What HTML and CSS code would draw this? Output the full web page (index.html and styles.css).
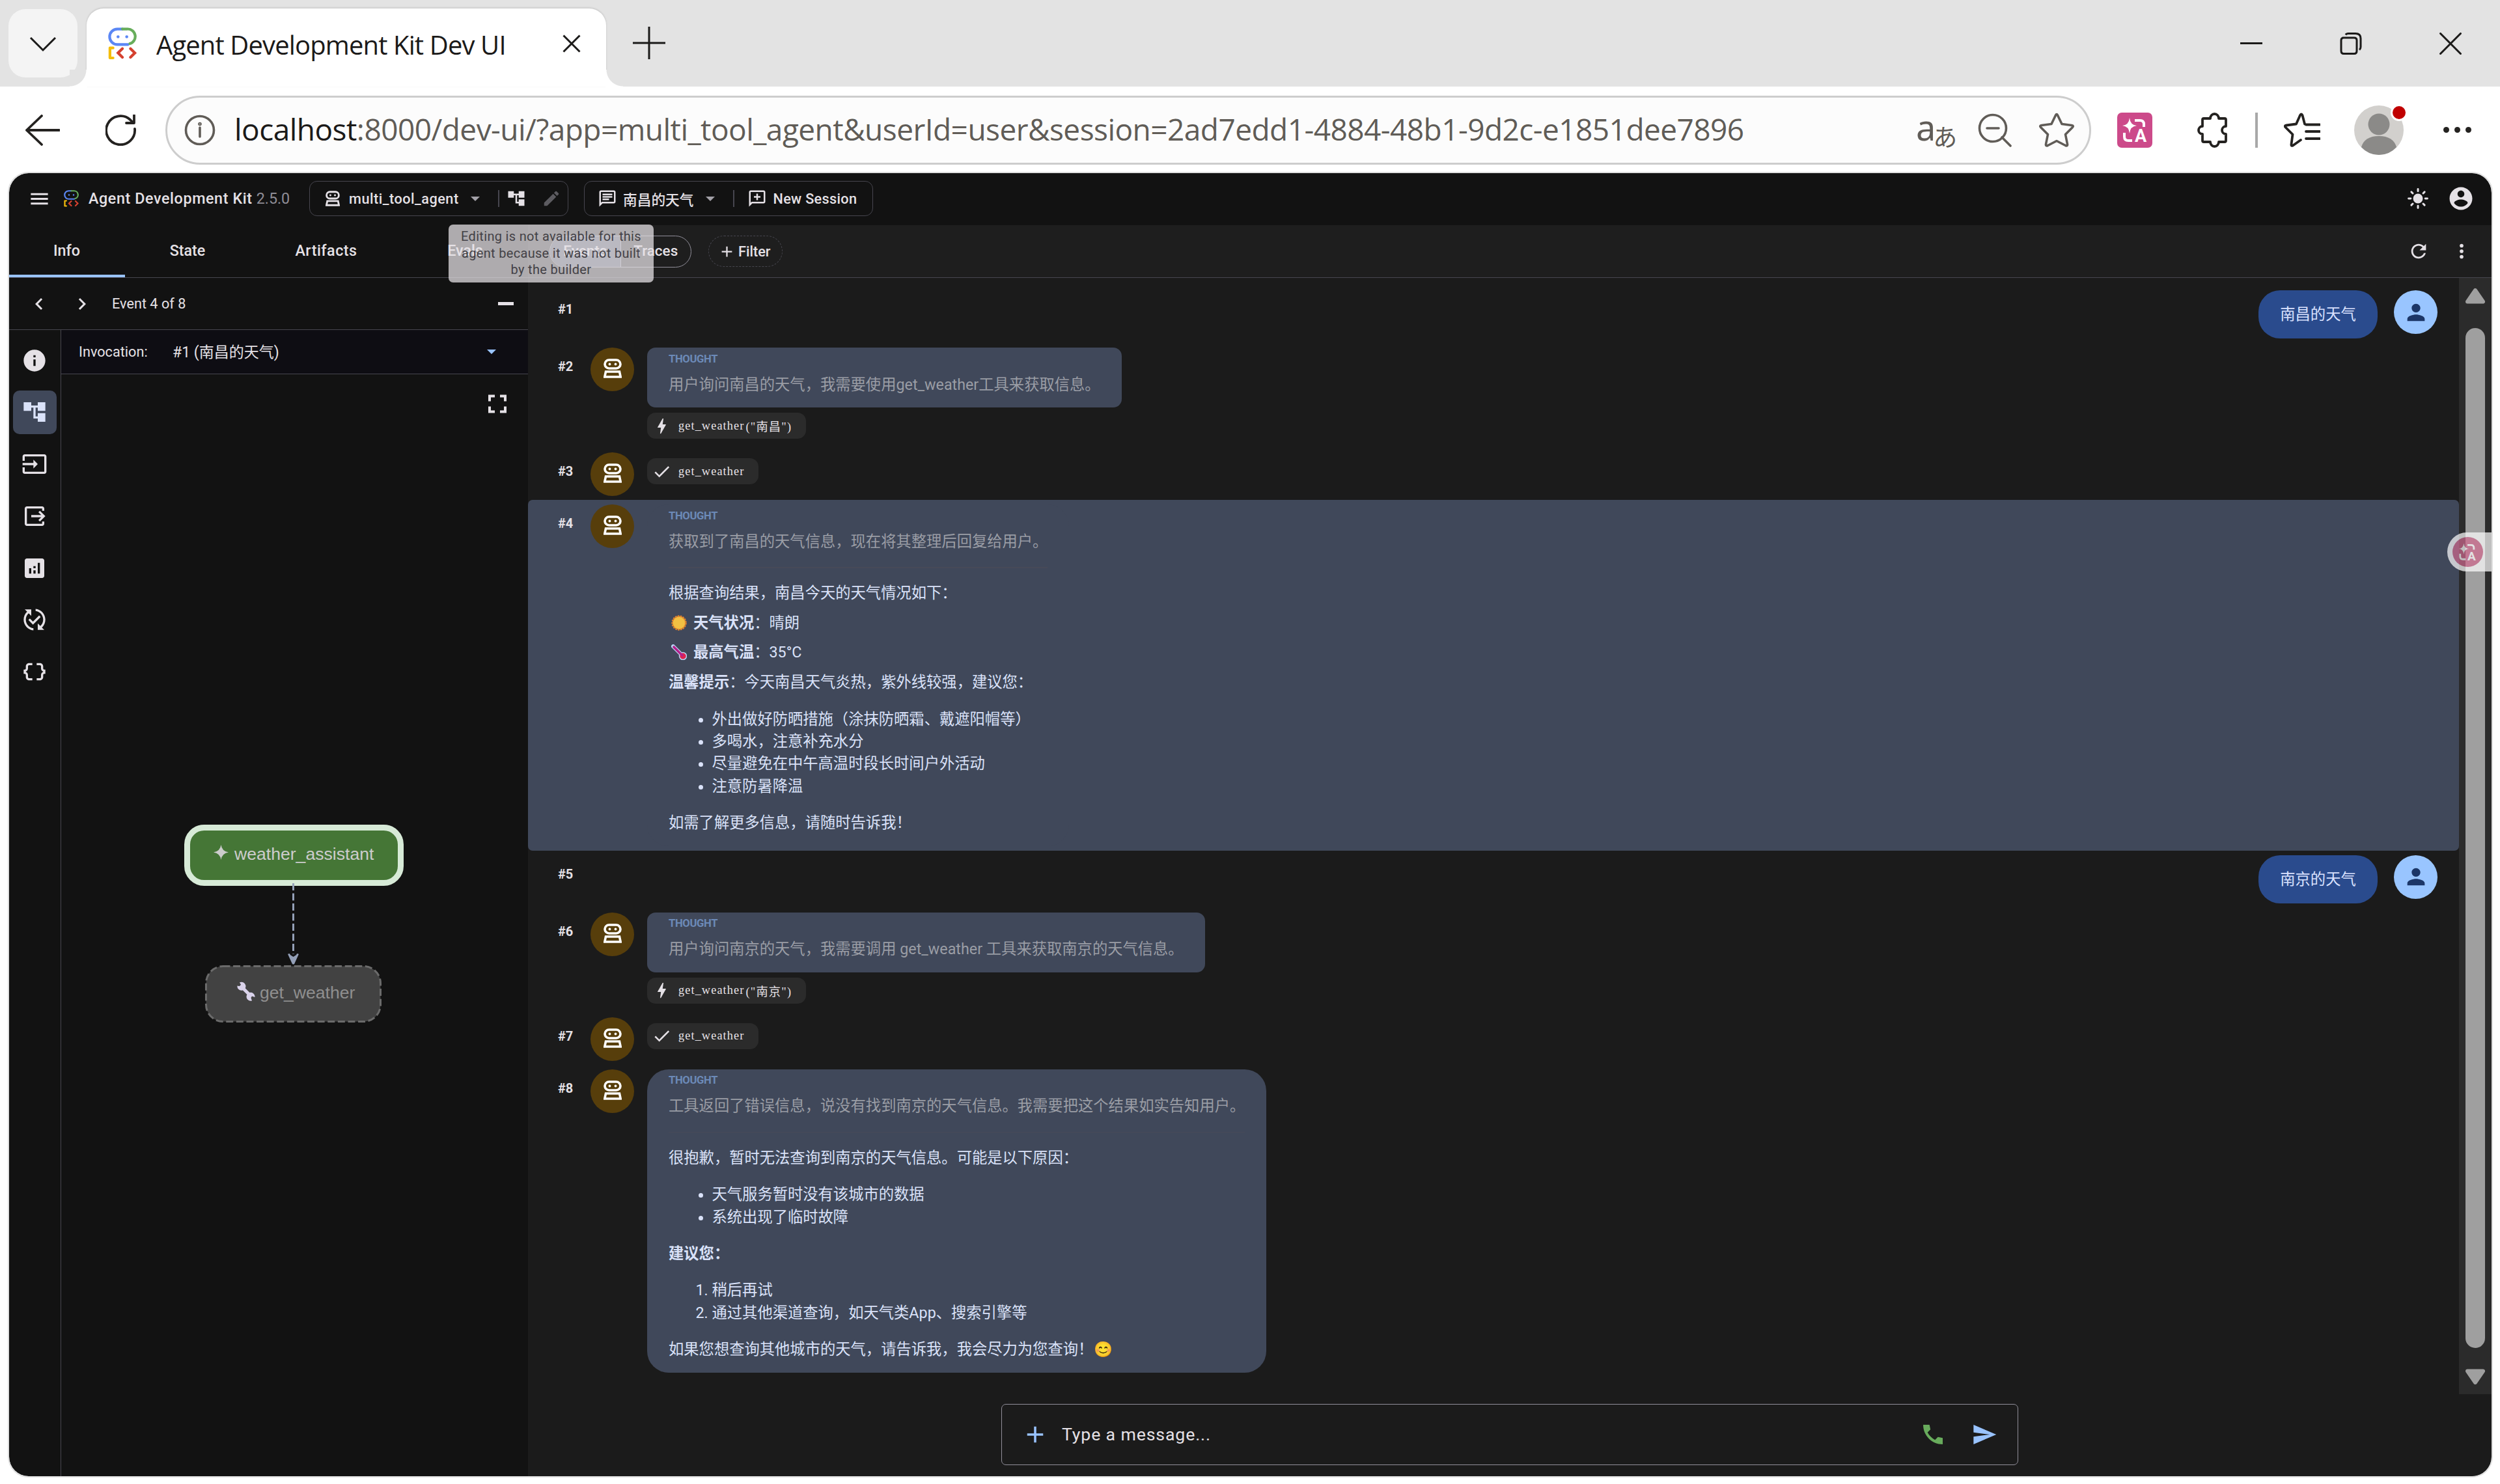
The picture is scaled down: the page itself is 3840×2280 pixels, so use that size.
FILE: index.html
```html
<!DOCTYPE html>
<html lang="zh-CN">

<head>
    <meta charset="UTF-8">
    <meta name="viewport" content="width=device-width, initial-scale=1.0">
    <title>Agent Development Kit Dev UI</title>
    <link rel="stylesheet" href="styles.css">
</head>

<body>
    <!-- Icônes partagées -->
    <svg class="sprite">
        <symbol id="i-logo" viewBox="0 0 46 52" fill="none" stroke-width="4.4" stroke-linecap="round">
            <path d="M23 2.5H15A12 12 0 0 0 15 27.500H32" stroke="#5b87f5"/>
            <path d="M23 2.500H31A12 12 0 0 1 35 26" stroke="#67ad5b"/>
            <circle cx="16" cy="15" r="2.400" fill="#5b87f5"/>
            <circle cx="30" cy="15" r="2.400" fill="#5b87f5"/>
            <path d="M8 33H3V49H8" stroke="#f4bd0b" stroke-linejoin="round"/>
            <path d="M23 34L16 41L23 48M36 34L43 41L36 48" stroke="#d5412f"/>
        </symbol>
        <symbol id="i-robot" viewBox="0 0 28 30" fill="none" stroke="currentColor" stroke-width="3.6">
            <rect x="2" y="2" width="24" height="13" rx="6.500"/>
            <circle cx="9.500" cy="8.500" r="1.900" fill="currentColor" stroke="none"/>
            <circle cx="18.500" cy="8.500" r="1.900" fill="currentColor" stroke="none"/>
            <path d="M3.500 20H24.500L26.200 28H1.800Z"/>
        </symbol>
        <symbol id="i-menu" viewBox="0 0 24 24"><path d="M3 18h18v-2H3v2zm0-5h18v-2H3v2zm0-7v2h18V6H3z"/></symbol>
        <symbol id="i-tree" viewBox="0 0 24 24"><path d="M22 11V3h-7v3H9V3H2v8h7V8h2v10h4v3h7v-8h-7v3h-2V8h2v3z"/></symbol>
        <symbol id="i-edit" viewBox="0 0 24 24"><path d="M3 17.250V21h3.750L17.810 9.940l-3.750-3.750L3 17.250zM20.710 7.040a1 1 0 0 0 0-1.410l-2.340-2.340a1 1 0 0 0-1.410 0l-1.830 1.830 3.750 3.750 1.830-1.830z"/></symbol>
        <symbol id="i-chat" viewBox="0 0 24 24"><path d="M4 4h16v12H5.170L4 17.170V4m0-2c-1.100 0-1.990.9-1.990 2L2 22l4-4h14c1.100 0 2-.9 2-2V4c0-1.100-.9-2-2-2H4zm2 10h8v2H6v-2zm0-3h12v2H6V9zm0-3h12v2H6V6z"/></symbol>
        <symbol id="i-newchat" viewBox="0 0 24 24"><path d="M4 4h16v12H5.170L4 17.170V4m0-2c-1.100 0-1.990.9-1.990 2L2 22l4-4h14c1.100 0 2-.9 2-2V4c0-1.100-.9-2-2-2H4zM11 14h2v-3h3V9h-3V6h-2v3H8v2h3z"/></symbol>
        <symbol id="i-account" viewBox="0 0 24 24"><path d="M12 2C6.480 2 2 6.480 2 12s4.480 10 10 10 10-4.480 10-10S17.520 2 12 2zm0 3c1.660 0 3 1.340 3 3s-1.340 3-3 3-3-1.340-3-3 1.340-3 3-3zm0 14.200c-2.500 0-4.710-1.280-6-3.220.03-1.990 4-3.080 6-3.080 1.990 0 5.970 1.090 6 3.080-1.290 1.940-3.500 3.220-6 3.220z"/></symbol>
        <symbol id="i-refresh" viewBox="0 0 24 24"><path d="M17.650 6.350C16.200 4.900 14.210 4 12 4c-4.420 0-7.990 3.580-7.990 8s3.570 8 7.990 8c3.730 0 6.840-2.550 7.730-6h-2.080c-.82 2.330-3.040 4-5.650 4-3.310 0-6-2.690-6-6s2.690-6 6-6c1.660 0 3.140.69 4.220 1.780L13 11h7V4l-2.350 2.350z"/></symbol>
        <symbol id="i-more" viewBox="0 0 24 24"><circle cx="12" cy="6" r="2"/><circle cx="12" cy="12" r="2"/><circle cx="12" cy="18" r="2"/></symbol>
        <symbol id="i-left" viewBox="0 0 24 24"><path d="M15.410 7.410 14 6l-6 6 6 6 1.410-1.410L10.830 12z"/></symbol>
        <symbol id="i-right" viewBox="0 0 24 24"><path d="M10 6 8.590 7.410 13.170 12l-4.580 4.590L10 18l6-6z"/></symbol>
        <symbol id="i-info" viewBox="0 0 24 24"><path d="M12 2C6.480 2 2 6.480 2 12s4.480 10 10 10 10-4.480 10-10S17.520 2 12 2zm1 15h-2v-6h2v6zm0-8h-2V7h2v2z"/></symbol>
        <symbol id="i-input" viewBox="0 0 24 24"><path d="M21 3.010H3c-1.100 0-2 .9-2 2V9h2V4.990h18v14.030H3V15H1v4.010c0 1.100.9 1.980 2 1.980h18c1.100 0 2-.88 2-1.980v-14c0-1.110-.9-2-2-2zM11 16l4-4-4-4v3H1v2h10v3z"/></symbol>
        <symbol id="i-output" viewBox="0 0 24 24"><path d="M17 17l5-5-5-5-1.410 1.410L18.170 11H9v2h9.170l-2.580 2.590zM19 19H5V5h14v2h2V5c0-1.100-.89-2-2-2H5c-1.100 0-2 .9-2 2v14c0 1.100.9 2 2 2h14c1.100 0 2-.9 2-2v-2h-2z"/></symbol>
        <symbol id="i-analytics" viewBox="0 0 24 24"><path d="M19 3H5c-1.100 0-2 .9-2 2v14c0 1.100.9 2 2 2h14c1.100 0 2-.9 2-2V5c0-1.100-.9-2-2-2zM9 17H7v-5h2v5zm4 0h-2v-3h2v3zm0-5h-2v-2h2v2zm4 5h-2V7h2v10z"/></symbol>
        <symbol id="i-sync" viewBox="0 0 24 24"><path d="M17.660 9.530l-7.070 7.070-4.240-4.240 1.410-1.410 2.830 2.830 5.660-5.660 1.410 1.410zM4 12c0-2.330 1.020-4.420 2.620-5.880L9 8.500v-6H3l2.200 2.200C3.240 6.520 2 9.110 2 12c0 5.190 3.950 9.450 9 9.950v-2.020c-3.940-.49-7-3.860-7-7.930zm18 0c0-5.190-3.950-9.450-9-9.950v2.020c3.940.49 7 3.860 7 7.930 0 2.330-1.020 4.420-2.620 5.880L15 15.500v6h6l-2.200-2.200c1.960-1.820 3.200-4.410 3.200-7.300z"/></symbol>
        <symbol id="i-json" viewBox="0 0 24 24"><path d="M4 7v2c0 .55-.45 1-1 1H2v4h1c.55 0 1 .45 1 1v2c0 1.650 1.350 3 3 3h3v-2H7c-.55 0-1-.45-1-1v-2c0-1.300-.84-2.420-2-2.830v-.34C5.160 11.420 6 10.300 6 9V7c0-.55.45-1 1-1h3V4H7C5.350 4 4 5.350 4 7zM21 10c-.55 0-1-.45-1-1V7c0-1.650-1.350-3-3-3h-3v2h3c.55 0 1 .45 1 1v2c0 1.300.84 2.420 2 2.830v.34c-1.160.41-2 1.520-2 2.830v2c0 .55-.45 1-1 1h-3v2h3c1.650 0 3-1.350 3-3v-2c0-.55.45-1 1-1h1v-4h-1z"/></symbol>
        <symbol id="i-bolt" viewBox="0 0 24 24"><path d="M11 21h-1l1-7H7.500c-.58 0-.57-.32-.38-.66C8.480 10.940 10.420 7.540 13 3h1l-1 7h3.500c.49 0 .56.33.47.51C12.960 17.550 11 21 11 21z"/></symbol>
        <symbol id="i-check" viewBox="0 0 24 24"><path d="M9 16.170 4.830 12l-1.420 1.410L9 19 21 7l-1.410-1.410z"/></symbol>
        <symbol id="i-person" viewBox="0 0 24 24"><path d="M12 12c2.210 0 4-1.790 4-4s-1.790-4-4-4-4 1.790-4 4 1.790 4 4 4zm0 2c-2.670 0-8 1.340-8 4v2h16v-2c0-2.660-5.330-4-8-4z"/></symbol>
        <symbol id="i-add" viewBox="0 0 24 24"><path d="M19 13h-6v6h-2v-6H5v-2h6V5h2v6h6z"/></symbol>
        <symbol id="i-call" viewBox="0 0 24 24"><path d="M8.800 3H3C3 13 11 21 21 21V15.200L16.600 14.300L13.900 17C11 15.500 8.500 13 7 10.100L9.700 7.300Z"/></symbol>
        <symbol id="i-send" viewBox="0 0 24 24"><path d="M2.010 21 23 12 2.010 3 2 10l15 2-15 2z"/></symbol>
        <symbol id="i-full" viewBox="0 0 28 28"><path d="M0 0H10V4H4V10H0ZM18 0H28V10H24V4H18ZM0 18H4V24H10V28H0ZM24 18H28V28H18V24H24Z"/></symbol>
        <symbol id="i-caret" viewBox="0 0 14 7"><path d="M0 0H14L7 7Z"/></symbol>
        <symbol id="i-sun" viewBox="0 0 30 30">
            <circle cx="15" cy="15" r="7"/>
            <path d="M15 1.500V4.500M15 25.500V28.500M1.500 15H4.500M25.500 15H28.500M5.500 5.500L7.500 7.500M22.500 22.500L24.500 24.500M5.500 24.500L7.500 22.500M22.500 7.500L24.500 5.500" stroke="currentColor" stroke-width="2.800" stroke-linecap="round"/>
        </symbol>
        <symbol id="i-translate" viewBox="0 0 54 54">
            <path d="M19 8Q20 19 30 20Q20 21 19 32Q18 21 8 20Q18 19 19 8Z" fill="#fff"/>
            <path d="M27 12H35Q41 12 41 18V22M11 31V37Q11 43 17 43H23" fill="none" stroke="#fff" stroke-width="4"/>
            <text x="36" y="45" text-anchor="middle" font-family="Roboto, sans-serif" font-weight="700" font-size="27" fill="#fff">A</text>
        </symbol>
    </svg>

    <div class="tabstrip">
        <div class="tab-menu">
            <svg width="42" height="24" viewBox="0 0 42 24"><path d="M2 2L21 21L40 2"/></svg>
        </div>
        <div class="browser-tab">
            <svg class="favicon"><use href="#i-logo"/></svg>
            <span class="tab-title">Agent Development Kit Dev UI</span>
            <svg width="28" height="28" viewBox="0 0 28 28"><path d="M1.500 1.500L26.500 26.500M26.500 1.500L1.500 26.500"/></svg>
        </div>
        <svg class="new-tab" width="50" height="50" viewBox="0 0 50 50"><path d="M25 0V50M0 25H50"/></svg>
        <div class="window-buttons">
            <svg width="34" height="34" viewBox="0 0 34 34"><path d="M0 16.500H34"/></svg>
            <svg width="34" height="34" viewBox="0 0 34 34"><path d="M4 8H22Q26 8 26 12V28Q26 32.500 22 32.500H6Q2 32.500 2 28V12Q2 8 6 8ZM9 3.500Q10 1.500 13 1.500H24Q32 1.500 32 9V22Q32 25 30 26.500"/></svg>
            <svg width="34" height="34" viewBox="0 0 34 34"><path d="M0.500 0.500L33.500 33.500M33.500 0.500L0.500 33.500"/></svg>
        </div>
    </div>

    <div class="toolbar">
        <svg class="nav-back" width="54" height="48" viewBox="0 0 54 48"><path d="M26 2L3 24L26 46M3 24H53"/></svg>
        <svg class="nav-reload" width="48" height="48" viewBox="0 0 48 48"><path d="M45 22A22 22 0 1 1 38 8L43 13M44 1V13H32"/></svg>
        <div class="address">
            <svg width="48" height="48" viewBox="0 0 48 48"><circle cx="24" cy="24" r="21.500"/><path d="M24 20V34"/><circle cx="24" cy="14.500" r="1" /></svg>
            <span class="url"><b>localhost</b>:8000/dev-ui/?app=multi_tool_agent&amp;userId=user&amp;session=2ad7edd1-4884-48b1-9d2c-e1851dee7896</span>
            <span class="lang"><i>a</i><em>あ</em></span>
            <svg class="zoom-out" width="52" height="52" viewBox="0 0 52 52"><circle cx="23" cy="23" r="20.500"/><path d="M14 23H32M37 37L50 50"/></svg>
            <svg class="star" width="54" height="54" viewBox="0 0 54 54"><path d="M25.500 4Q27 1 28.500 4L35 17.500L50 19.500Q54 20 51 23L40.500 33.500L43.500 48.500Q44 52 40.500 50.500L27 43.500L13.500 50.500Q10 52 10.500 48.500L13.500 33.500L3 23Q0 20 4 19.500L19 17.500Z"/></svg>
        </div>
        <div class="ext"><svg><use href="#i-translate"/></svg></div>
        <svg class="puzzle" width="52" height="56" viewBox="0 0 52 56"><path d="M8 12Q8 10 10 10H20A6.500 7 0 0 1 33 10H42Q44 10 44 12V22A6 6 0 0 0 44 34V44Q44 46 42 46H33A6.500 7 0 0 1 20 46H10Q8 46 8 44V34A6 6 0 0 1 8 22Z"/></svg>
        <div class="bar-divider"></div>
        <svg class="favs" width="56" height="54" viewBox="0 0 56 54"><path d="M32 17.500L28.500 4Q27 1 25 4L19 17.500L4 19.500Q0 20 3 23L13.500 33.500L11.500 48.500Q11 52 14 50.500L26 42M34 18.500H55M34 29H55M34 40H55"/></svg>
        <div class="profile">
            <svg width="76" height="76" viewBox="0 0 76 76"><circle cx="38" cy="38" r="38" fill="#d2d0cd"/><circle cx="38" cy="29" r="16.500" fill="#8b8a88"/><path d="M11 64Q16 47 38 47Q60 47 65 64Q54 76 38 76Q22 76 11 64Z" fill="#8b8a88"/></svg>
            <span class="profile-dot"></span>
        </div>
        <div class="dots"><i></i><i></i><i></i></div>
    </div>

    <div class="app">
        <header class="app-header">
            <div class="brand">
                <svg class="menu-icon"><use href="#i-menu"/></svg>
                <svg class="logo"><use href="#i-logo"/></svg>
                <span class="brand-name">Agent Development Kit</span>
                <span class="brand-version">2.5.0</span>
            </div>
            <div class="chip chip-app">
                <svg class="robot"><use href="#i-robot"/></svg>
                <span class="chip-label app-label">multi_tool_agent</span>
                <svg class="caret"><use href="#i-caret"/></svg>
                <span class="chip-divider app-divider"></span>
                <svg class="icon-30"><use href="#i-tree"/></svg>
                <svg class="icon-30 pencil"><use href="#i-edit"/></svg>
            </div>
            <div class="chip chip-session">
                <svg class="icon-30"><use href="#i-chat"/></svg>
                <span class="chip-label session-label">南昌的天气</span>
                <svg class="caret"><use href="#i-caret"/></svg>
                <span class="chip-divider session-divider"></span>
                <svg class="icon-30"><use href="#i-newchat"/></svg>
                <span class="chip-label new-session">New Session</span>
            </div>
            <div class="header-right">
                <svg class="theme"><use href="#i-sun"/></svg>
                <svg class="account"><use href="#i-account"/></svg>
            </div>
        </header>

        <div class="columns">
            <aside class="side">
                <nav class="side-tabs">
                    <span class="side-tab active">Info</span>
                    <span class="side-tab state">State</span>
                    <span class="side-tab artifacts">Artifacts</span>
                    <span class="side-tab evals">Evals</span>
                </nav>
                <div class="event-nav">
                    <svg class="icon-40"><use href="#i-left"/></svg>
                    <svg class="icon-40"><use href="#i-right"/></svg>
                    <span>Event 4 of 8</span>
                    <i class="collapse"></i>
                </div>
                <div class="side-body">
                    <div class="rail">
                        <div class="rail-item"><svg><use href="#i-info"/></svg></div>
                        <div class="rail-item selected"><svg><use href="#i-tree"/></svg></div>
                        <div class="rail-item"><svg><use href="#i-input"/></svg></div>
                        <div class="rail-item"><svg><use href="#i-output"/></svg></div>
                        <div class="rail-item"><svg><use href="#i-analytics"/></svg></div>
                        <div class="rail-item"><svg><use href="#i-sync"/></svg></div>
                        <div class="rail-item"><svg><use href="#i-json"/></svg></div>
                    </div>
                    <div class="graph-panel">
                        <div class="invocation">
                            <span class="inv-label">Invocation:</span>
                            <span class="inv-value">#1 (南昌的天气)</span>
                            <svg class="inv-caret"><use href="#i-caret"/></svg>
                        </div>
                        <div class="graph-tools"><svg><use href="#i-full"/></svg></div>
                        <svg class="graph" width="340" height="310" viewBox="0 0 340 310">
                            <rect x="5.500" y="5.500" width="328" height="85" rx="26" fill="#457636" stroke="#d7ead7" stroke-width="9"/>
                            <path d="M57.500 32Q59 42 69 43.500Q59 45 57.500 55Q56 45 46 43.500Q56 42 57.500 32Z" fill="#ccc"/>
                            <text x="78" y="54.500" fill="#ccc">weather_assistant</text>
                            <path d="M168.500 91V200" stroke="#94a0b8" stroke-width="3" stroke-dasharray="11 4.500"/>
                            <path d="M168.500 216L160.500 199L168.500 204L176.500 199Z" fill="#94a0b8"/>
                            <path d="M168.500 215L161.500 199.500M168.500 215L175.500 199.500" stroke="#94a0b8" stroke-width="3"/>
                            <rect x="34.500" y="218.500" width="268" height="85" rx="26" fill="#424242" stroke="#6b6b6b" stroke-width="3" stroke-dasharray="11 4.600"/>
                            <path d="M87 248L104 265" stroke="#d9d2ea" stroke-width="5"/>
                            <path d="M86 243.500A6.500 6.500 0 1 1 82.500 248.500L87 249.500L88.500 247.500ZM105 271.500A6.500 6.500 0 1 1 109.500 266L105 264.500L103.500 267Z" fill="#d9d2ea"/>
                            <text x="117" y="268" fill="#8f8f8f">get_weather</text>
                        </svg>
                    </div>
                </div>
            </aside>

            <main class="main">
                <div class="filters">
                    <div class="toggle"><span class="on">Events</span><span>Traces</span></div>
                    <div class="filter"><svg><use href="#i-add"/></svg>Filter</div>
                    <div class="filters-right">
                        <svg><use href="#i-refresh"/></svg>
                        <svg><use href="#i-more"/></svg>
                    </div>
                </div>

                <div class="scroll">
                    <div class="messages">
                        <div class="row user h88">
                            <span class="num">#1</span>
                            <div class="bubble-user">南昌的天气</div>
                            <div class="avatar-user"><svg><use href="#i-person"/></svg></div>
                        </div>
                        <div class="row h161">
                            <span class="num">#2</span>
                            <div class="avatar"><svg><use href="#i-robot"/></svg></div>
                            <div class="content">
                                <div class="bubble small">
                                    <div class="thought-label">THOUGHT</div>
                                    <p class="thought">用户询问南昌的天气，我需要使用get_weather工具来获取信息。</p>
                                </div>
                                <div class="tool call"><svg><use href="#i-bolt"/></svg>get_weather<s>("南昌")</s></div>
                            </div>
                        </div>
                        <div class="row h80">
                            <span class="num">#3</span>
                            <div class="avatar"><svg><use href="#i-robot"/></svg></div>
                            <div class="content"><div class="tool response"><svg><use href="#i-check"/></svg>get_weather</div></div>
                        </div>
                        <div class="row highlighted">
                            <span class="num">#4</span>
                            <div class="avatar"><svg><use href="#i-robot"/></svg></div>
                            <div class="content">
                                <div class="bubble">
                                    <div class="thought-label">THOUGHT</div>
                                    <p class="thought">获取到了南昌的天气信息，现在将其整理后回复给用户。</p>
                                    <div class="sep"></div>
                                    <p>根据查询结果，南昌今天的天气情况如下：</p>
                                    <p><svg class="emoji" viewBox="0 0 24 24"><circle cx="12" cy="12" r="10.200" fill="#f2b93a" stroke="#e2822d" stroke-width="3" stroke-dasharray="2.600 1.200"/><circle cx="12" cy="12" r="9" fill="#f2c043"/></svg><strong>天气状况</strong>：晴朗</p>
                                    <p><svg class="emoji" viewBox="0 0 24 24"><path d="M3 3L17 17" stroke="#b9d4f5" stroke-width="6" stroke-linecap="round"/><circle cx="18" cy="18" r="5.500" fill="#e0244f" stroke="#b9d4f5" stroke-width="1.500"/><path d="M4 4L17 17" stroke="#b3208a" stroke-width="3.600" stroke-linecap="round"/></svg><strong>最高气温</strong>：35°C</p>
                                    <p><strong>温馨提示</strong>：今天南昌天气炎热，紫外线较强，建议您：</p>
                                    <ul>
                                        <li>外出做好防晒措施（涂抹防晒霜、戴遮阳帽等）</li>
                                        <li>多喝水，注意补充水分</li>
                                        <li>尽量避免在中午高温时段长时间户外活动</li>
                                        <li>注意防暑降温</li>
                                    </ul>
                                    <p>如需了解更多信息，请随时告诉我！</p>
                                </div>
                            </div>
                        </div>
                        <div class="row user h88">
                            <span class="num">#5</span>
                            <div class="bubble-user">南京的天气</div>
                            <div class="avatar-user"><svg><use href="#i-person"/></svg></div>
                        </div>
                        <div class="row h161">
                            <span class="num">#6</span>
                            <div class="avatar"><svg><use href="#i-robot"/></svg></div>
                            <div class="content">
                                <div class="bubble small">
                                    <div class="thought-label">THOUGHT</div>
                                    <p class="thought">用户询问南京的天气，我需要调用 get_weather 工具来获取南京的天气信息。</p>
                                </div>
                                <div class="tool call"><svg><use href="#i-bolt"/></svg>get_weather<s>("南京")</s></div>
                            </div>
                        </div>
                        <div class="row h80">
                            <span class="num">#7</span>
                            <div class="avatar"><svg><use href="#i-robot"/></svg></div>
                            <div class="content"><div class="tool response"><svg><use href="#i-check"/></svg>get_weather</div></div>
                        </div>
                        <div class="row">
                            <span class="num">#8</span>
                            <div class="avatar"><svg><use href="#i-robot"/></svg></div>
                            <div class="content">
                                <div class="bubble">
                                    <div class="thought-label">THOUGHT</div>
                                    <p class="thought">工具返回了错误信息，说没有找到南京的天气信息。我需要把这个结果如实告知用户。</p>
                                    <div class="sep"></div>
                                    <p>很抱歉，暂时无法查询到南京的天气信息。可能是以下原因：</p>
                                    <ul>
                                        <li>天气服务暂时没有该城市的数据</li>
                                        <li>系统出现了临时故障</li>
                                    </ul>
                                    <p><strong>建议您：</strong></p>
                                    <ol>
                                        <li>稍后再试</li>
                                        <li>通过其他渠道查询，如天气类App、搜索引擎等</li>
                                    </ol>
                                    <p>如果您想查询其他城市的天气，请告诉我，我会尽力为您查询！<span class="smile">😊</span></p>
                                </div>
                            </div>
                        </div>
                    </div>
                    <div class="scrollbar">
                        <svg width="30" height="24" viewBox="0 0 30 24"><path d="M15 3L27 20.500H3Z"/></svg>
                        <div class="thumb"></div>
                        <svg width="30" height="24" viewBox="0 0 30 24"><path d="M15 21L27 3.500H3Z"/></svg>
                    </div>
                </div>

                <div class="composer">
                    <svg class="plus"><use href="#i-add"/></svg>
                    <span class="placeholder">Type a message...</span>
                    <svg class="phone"><use href="#i-call"/></svg>
                    <svg class="send"><use href="#i-send"/></svg>
                </div>
            </main>
        </div>

        <div class="tooltip">Editing is not available for this agent because it was not built by the builder</div>
        <div class="float-translate"><div class="float-circle"><svg><use href="#i-translate"/></svg></div></div>
    </div>
</body>

</html>
```

FILE: styles.css
```css
* {
    box-sizing: border-box;
}

body {
    margin: 0;
    width: 3840px;
    height: 2280px;
    overflow: hidden;
    background-color: #fff;
    font-family: Roboto, "Noto Sans CJK SC", sans-serif;
    font-size: 23.3px;
    color: #e5e1e6;
}

svg {
    flex: none;
    display: block;
    fill: currentColor;
}

p, ul, ol {
    margin: 0;
}

.sprite {
    position: absolute;
    width: 0;
    height: 0;
}

/* Barre d'onglets */
.tabstrip {
    display: flex;
    height: 133px;
    background-color: #e3e3e3;
    color: #1b1a19;
}

.tabstrip svg:not(.favicon) {
    fill: none;
    stroke: #1b1a19;
    stroke-width: 3;
}

.tab-menu {
    display: flex;
    align-items: center;
    justify-content: center;
    width: 106px;
    height: 105px;
    margin: 14px 14px 0 13px;
    padding-top: 3px;
    border-radius: 26px;
    background-color: #f4f4f4;
}

.browser-tab {
    position: relative;
    display: flex;
    align-items: center;
    width: 798px;
    height: 120px;
    margin-top: 13px;
    padding: 0 39px 13px 33px;
    border-radius: 26px 26px 0 0;
    background-color: #fff;
    box-shadow: 0 -1px 3px rgba(0,0,0,0.15);
}

.browser-tab::before, .browser-tab::after {
    content: "";
    position: absolute;
    bottom: 0;
    left: -26px;
    width: 26px;
    height: 26px;
    background: radial-gradient(circle at 0 0, #e3e3e3 25px, #fff 26px);
}

.browser-tab::after {
    left: auto;
    right: -26px;
    background: radial-gradient(circle at 100% 0, #e3e3e3 25px, #fff 26px);
}

.favicon {
    width: 44px;
    height: 50px;
}

.tab-title {
    flex: 1;
    margin-left: 30px;
    padding-top: 4px;
    font-family: "Open Sans", sans-serif;
    font-size: 40px;
    letter-spacing: -0.88px;
    white-space: nowrap;
}

.new-tab {
    margin: 41px 0 0 41px;
}

.window-buttons {
    display: flex;
    gap: 119px;
    margin: 50px 59px 0 auto;
}

/* Barre d'adresse */
.toolbar {
    display: flex;
    align-items: center;
    height: 133px;
    color: #242220;
}

.nav-back, .nav-reload, .puzzle, .favs {
    fill: none;
    stroke: #242220;
    stroke-width: 3.8;
    stroke-linejoin: round;
    stroke-linecap: round;
}

.nav-back {
    margin-left: 38px;
}

.nav-reload {
    margin-left: 70px;
}

.address {
    display: flex;
    align-items: center;
    width: 2958px;
    height: 106px;
    margin-left: 44px;
    padding-left: 26px;
    border: 3px solid #cdcdcd;
    border-radius: 53px;
    background-color: #fcfcfc;
    color: #605c57;
}

.address svg {
    fill: none;
    stroke: #605c57;
    stroke-width: 3.6;
    stroke-linecap: round;
    stroke-linejoin: round;
}

.url {
    width: 2570px;
    margin-left: 29px;
    padding-bottom: 4px;
    font-family: "Open Sans", sans-serif;
    font-size: 46px;
    letter-spacing: -0.54px;
    white-space: nowrap;
}

.url b {
    font-weight: 400;
    color: #1b1a19;
}

.lang {
    display: flex;
    align-items: baseline;
    width: 92px;
    margin-left: 13px;
    padding-bottom: 10px;
    font-family: "Noto Sans", sans-serif;
}

.lang i {
    font-style: normal;
    font-size: 54px;
    line-height: 60px;
}

.lang em {
    position: relative;
    top: 9px;
    left: -4px;
    font-style: normal;
    font-family: "Noto Sans CJK JP", sans-serif;
    font-size: 37px;
    line-height: 40px;
}

.zoom-out {
    margin-left: 3px;
}

.star {
    margin-left: 42px;
}

.ext {
    width: 54px;
    height: 54px;
    margin-left: 40px;
    border-radius: 7px;
    background-color: #cc4a8a;
}

.ext svg {
    width: 54px;
    height: 54px;
}

.puzzle {
    margin-left: 69px;
}

.bar-divider {
    width: 4px;
    height: 54px;
    margin-left: 37px;
    background-color: #a8a8a8;
}

.favs {
    margin-left: 40px;
}

.profile {
    position: relative;
    margin-left: 52px;
}

.profile-dot {
    position: absolute;
    top: -2px;
    right: -6px;
    width: 26px;
    height: 26px;
    border: 3px solid #fff;
    border-radius: 50%;
    background-color: #c00000;
}

.dots {
    display: flex;
    gap: 8px;
    margin-left: 61px;
}

.dots i {
    width: 9px;
    height: 9px;
    border-radius: 50%;
    background-color: #242220;
}

/* Application */
.app {
    position: relative;
    display: flex;
    flex-direction: column;
    width: 3813px;
    height: 2002px;
    margin-left: 14px;
    border-radius: 30px;
    overflow: hidden;
    background-color: #121212;
    outline: 2px solid #e0e0e0;
}

.app-header {
    display: flex;
    align-items: center;
    height: 80px;
    padding-left: 29px;
    padding-bottom: 2px;
}

.brand {
    display: flex;
    align-items: center;
    width: 432px;
}

.menu-icon {
    width: 35px;
    height: 35px;
}

.logo {
    width: 23px;
    height: 26px;
    margin-left: 20px;
}

.brand-name {
    margin-left: 15px;
    font-weight: 500;
    letter-spacing: 0.6px;
}

.brand-version {
    margin-left: 6px;
    color: #8f8d96;
}

.chip {
    display: flex;
    align-items: center;
    height: 54px;
    border: 1.5px solid #47464f;
    border-radius: 12px;
    font-size: 21.7px;
    font-weight: 500;
}

.chip-app {
    width: 398px;
    padding-left: 24px;
}

.chip-session {
    width: 444px;
    margin-left: 24px;
    padding-left: 20px;
}

.robot {
    width: 22px;
    height: 24px;
}

.app-label {
    width: 187px;
    margin-left: 14px;
    letter-spacing: 0.5px;
}

.session-label {
    width: 127px;
    margin-left: 9px;
}

.new-session {
    margin-left: 10px;
    letter-spacing: 0.3px;
}

.caret {
    width: 14px;
    height: 7px;
    color: #a3a1a8;
}

.chip-divider {
    width: 1.5px;
    height: 26px;
    background-color: #47464f;
}

.app-divider {
    margin: 0 11px 0 28px;
}

.session-divider {
    margin: 0 20px 0 28px;
}

.icon-30 {
    width: 30px;
    height: 30px;
}

.pencil {
    margin-left: 24px;
    color: #5c5b60;
}

.header-right {
    display: flex;
    align-items: center;
    gap: 29px;
    margin-left: auto;
    margin-right: 26px;
}

.theme {
    width: 32px;
    height: 32px;
}

.account {
    width: 42px;
    height: 42px;
}

.columns {
    display: flex;
    flex: 1;
}

/* Panneau latéral */
.side {
    display: flex;
    flex-direction: column;
    width: 797px;
}

.side-tabs {
    display: flex;
    height: 81px;
    border-bottom: 1.5px solid #47464f;
    font-weight: 500;
    line-height: 79px;
}

.side-tab {
    width: 178px;
    text-align: center;
}

.side-tab.active {
    height: 80px;
    padding-right: 1px;
    border-bottom: 4px solid #99c3ff;
}

.side-tab.state {
    width: 192px;
}

.side-tab.artifacts {
    width: 234px;
    letter-spacing: 0.5px;
}

.side-tab.evals {
    width: 193px;
}

.event-nav {
    display: flex;
    align-items: center;
    height: 80px;
    padding: 0 22px 0 28px;
    border-bottom: 1.5px solid #47464f;
    font-size: 21.7px;
}

.icon-40 {
    width: 36px;
    height: 36px;
    margin-right: 30px;
}

.icon-40 + .icon-40 {
    margin-right: 28px;
}

.collapse {
    width: 24px;
    height: 5px;
    margin-left: auto;
    background-color: #e5e1e6;
}

.side-body {
    display: flex;
    flex: 1;
}

.rail {
    display: flex;
    flex-direction: column;
    align-items: center;
    gap: 12.8px;
    width: 80px;
    padding: 13px 1px 0 0;
    border-right: 1.5px solid #47464f;
}

.rail-item {
    display: flex;
    align-items: center;
    justify-content: center;
    width: 67px;
    height: 67px;
    border-radius: 10px;
}

.rail-item svg {
    width: 40px;
    height: 40px;
}

.rail-item.selected {
    background-color: #40485a;
    color: #dae2f9;
}

.graph-panel {
    flex: 1;
    display: flex;
    flex-direction: column;
}

.invocation {
    display: flex;
    align-items: center;
    height: 68px;
    padding: 0 49px 0 27px;
    border-bottom: 1.5px solid #47464f;
    background-color: #0e0d13;
    font-size: 21.7px;
}

.inv-label {
    width: 144px;
}

.inv-value {
    flex: 1;
    padding-bottom: 3px;
    font-size: 23px;
}

.inv-caret {
    width: 14px;
    height: 7px;
    color: #99c3ff;
}

.graph-tools {
    display: flex;
    justify-content: flex-end;
    padding: 31px 33px 0 0;
}

.graph-tools svg {
    width: 28px;
    height: 29px;
}

.graph {
    margin: 631px 0 0 188px;
    fill: none;
    font-family: "Liberation Sans", Arial, sans-serif;
    font-size: 26.6px;
}

/* Zone de discussion */
.main {
    display: flex;
    flex-direction: column;
    width: 3016px;
    background-color: #1b1b1b;
}

.filters {
    display: flex;
    align-items: center;
    height: 81px;
    padding-left: 33px;
    border-bottom: 1.5px solid #47464f;
    border-top-left-radius: 20px;
    background-color: #1e1e1e;
    font-weight: 500;
}

.toggle {
    display: flex;
    width: 218px;
    height: 49px;
    border: 1.5px solid #918f9a;
    border-radius: 25px;
    overflow: hidden;
    line-height: 45px;
    text-align: center;
    font-size: 22.5px;
}

.toggle span {
    flex: 1;
}

.toggle .on {
    border-right: 1.5px solid #918f9a;
    background-color: #40485a;
}

.filter {
    display: flex;
    align-items: center;
    width: 114px;
    height: 48px;
    margin-left: 26px;
    padding-left: 14px;
    border: 1.5px dashed #47464f;
    border-radius: 24px;
    font-size: 21.7px;
}

.filter svg {
    width: 27px;
    height: 27px;
    margin-right: 4px;
}

.filters-right {
    display: flex;
    gap: 32px;
    margin-left: auto;
    margin-right: 29px;
}

.filters-right svg {
    width: 34px;
    height: 34px;
}

.scroll {
    display: flex;
    height: 1715px;
}

.messages {
    flex: 1;
    padding-top: 12px;
}

.row {
    display: flex;
    padding: 7px 33px 7px 46px;
}

.h88 {
    height: 88px;
}

.h161 {
    height: 161px;
}

.h80 {
    height: 80px;
}

.highlighted {
    border-radius: 7px;
    background-color: #40485a;
}

.num {
    width: 50px;
    padding-top: 17px;
    font-size: 20px;
    font-weight: 700;
    line-height: 24px;
}

.avatar, .avatar-user {
    display: flex;
    align-items: center;
    justify-content: center;
    flex: none;
    width: 67px;
    height: 67px;
    border-radius: 50%;
    background-color: #573e0b;
    color: #fff;
}

.avatar {
    padding-bottom: 3px;
}

.avatar svg {
    width: 28px;
    height: 30px;
}

.avatar-user {
    margin-left: 25px;
    background-color: #99c5ff;
    color: #1c3667;
}

.avatar-user svg {
    width: 40px;
    height: 40px;
}

.bubble-user {
    width: 183px;
    height: 74px;
    margin-left: auto;
    border-radius: 33px;
    background-color: #2a4b8d;
    color: #dae2ff;
    line-height: 75px;
    text-align: center;
}

.content {
    margin-left: 20px;
}

.bubble {
    padding: 7.5px 33px 18px;
    border-radius: 33px;
    background-color: #40485a;
    color: #dae2f9;
}

.bubble.small {
    height: 92px;
    border-radius: 13px;
}

.thought-label {
    height: 20px;
    margin-bottom: 12px;
    font-size: 16.7px;
    font-weight: 700;
    letter-spacing: -0.4px;
    line-height: 20px;
    color: #6c8ab8;
}

.bubble p {
    margin-bottom: 10.7px;
    line-height: 35px;
    white-space: nowrap;
}

.bubble p:last-child {
    margin-bottom: 0;
}

.bubble .thought {
    margin-bottom: 0;
    color: #9a9da5;
}

.sep {
    height: 1.5px;
    margin: 21.5px 0;
    background-color: #474a58;
}

.bubble ul, .bubble ol {
    margin: 21.7px 0;
    padding-left: 66.5px;
}

.bubble li {
    line-height: 34.3px;
}

.emoji {
    display: inline-block;
    width: 24px;
    height: 24px;
    margin: 0 10px 0 4px;
    vertical-align: -4px;
}

.smile {
    margin-left: 1px;
}

.tool {
    display: flex;
    align-items: center;
    height: 40px;
    padding-left: 7px;
    border-radius: 13px;
    background-color: #2b2b2b;
    font-family: "Liberation Serif", "Noto Sans CJK SC", serif;
    font-size: 18.3px;
    letter-spacing: 1.1px;
}

.tool s {
    margin-left: 2px;
    text-decoration: none;
    letter-spacing: 1.2px;
}

.tool svg {
    width: 31px;
    height: 31px;
    margin-right: 10px;
}

.tool.call {
    width: 244px;
    margin-top: 8px;
}

.tool.response {
    width: 171px;
    margin-top: 9px;
}

.scrollbar {
    display: flex;
    flex-direction: column;
    align-items: center;
    width: 50px;
    padding: 16px 0 15px;
    background-color: #2b2b2b;
    color: #9f9f9f;
}

.scrollbar svg {
    stroke: #9f9f9f;
    stroke-width: 6;
    stroke-linejoin: round;
}

.thumb {
    flex: 1;
    width: 30px;
    margin: 37px 0 32px;
    border-radius: 15px;
    background-color: #9f9f9f;
}

.composer {
    display: flex;
    align-items: center;
    width: 1562px;
    height: 94px;
    margin: 15px auto 0;
    padding: 0 31px 0 30px;
    border: 1.5px solid #918f9a;
    border-radius: 7px;
    font-size: 26.7px;
}

.plus {
    width: 42px;
    height: 42px;
    color: #99c3ff;
}

.placeholder {
    flex: 1;
    margin-left: 20px;
    letter-spacing: 0.85px;
}

.phone {
    width: 40px;
    height: 40px;
    color: #68ab5c;
}

.send {
    width: 40px;
    height: 40px;
    margin-left: 39px;
    color: #99c3ff;
}

.tooltip {
    position: absolute;
    top: 79px;
    left: 675px;
    width: 315px;
    height: 89px;
    padding: 6px 16px;
    border-radius: 7px;
    background-color: rgba(229,225,230,0.74);
    color: #434146;
    font-size: 20px;
    letter-spacing: 0.32px;
    line-height: 25.5px;
    text-align: center;
}

/* Bouton flottant de traduction */
.float-translate {
    position: absolute;
    top: 552px;
    right: 0;
    width: 68px;
    height: 60px;
    padding: 7px 8px;
    border-radius: 30px 0 0 30px;
    background-color: #fff;
    opacity: 0.7;
}

.float-circle {
    width: 47px;
    height: 46px;
    border-radius: 50%;
    background-color: #d1698f;
}

.float-circle svg {
    width: 46px;
    height: 46px;
    padding: 4px;
}
```
